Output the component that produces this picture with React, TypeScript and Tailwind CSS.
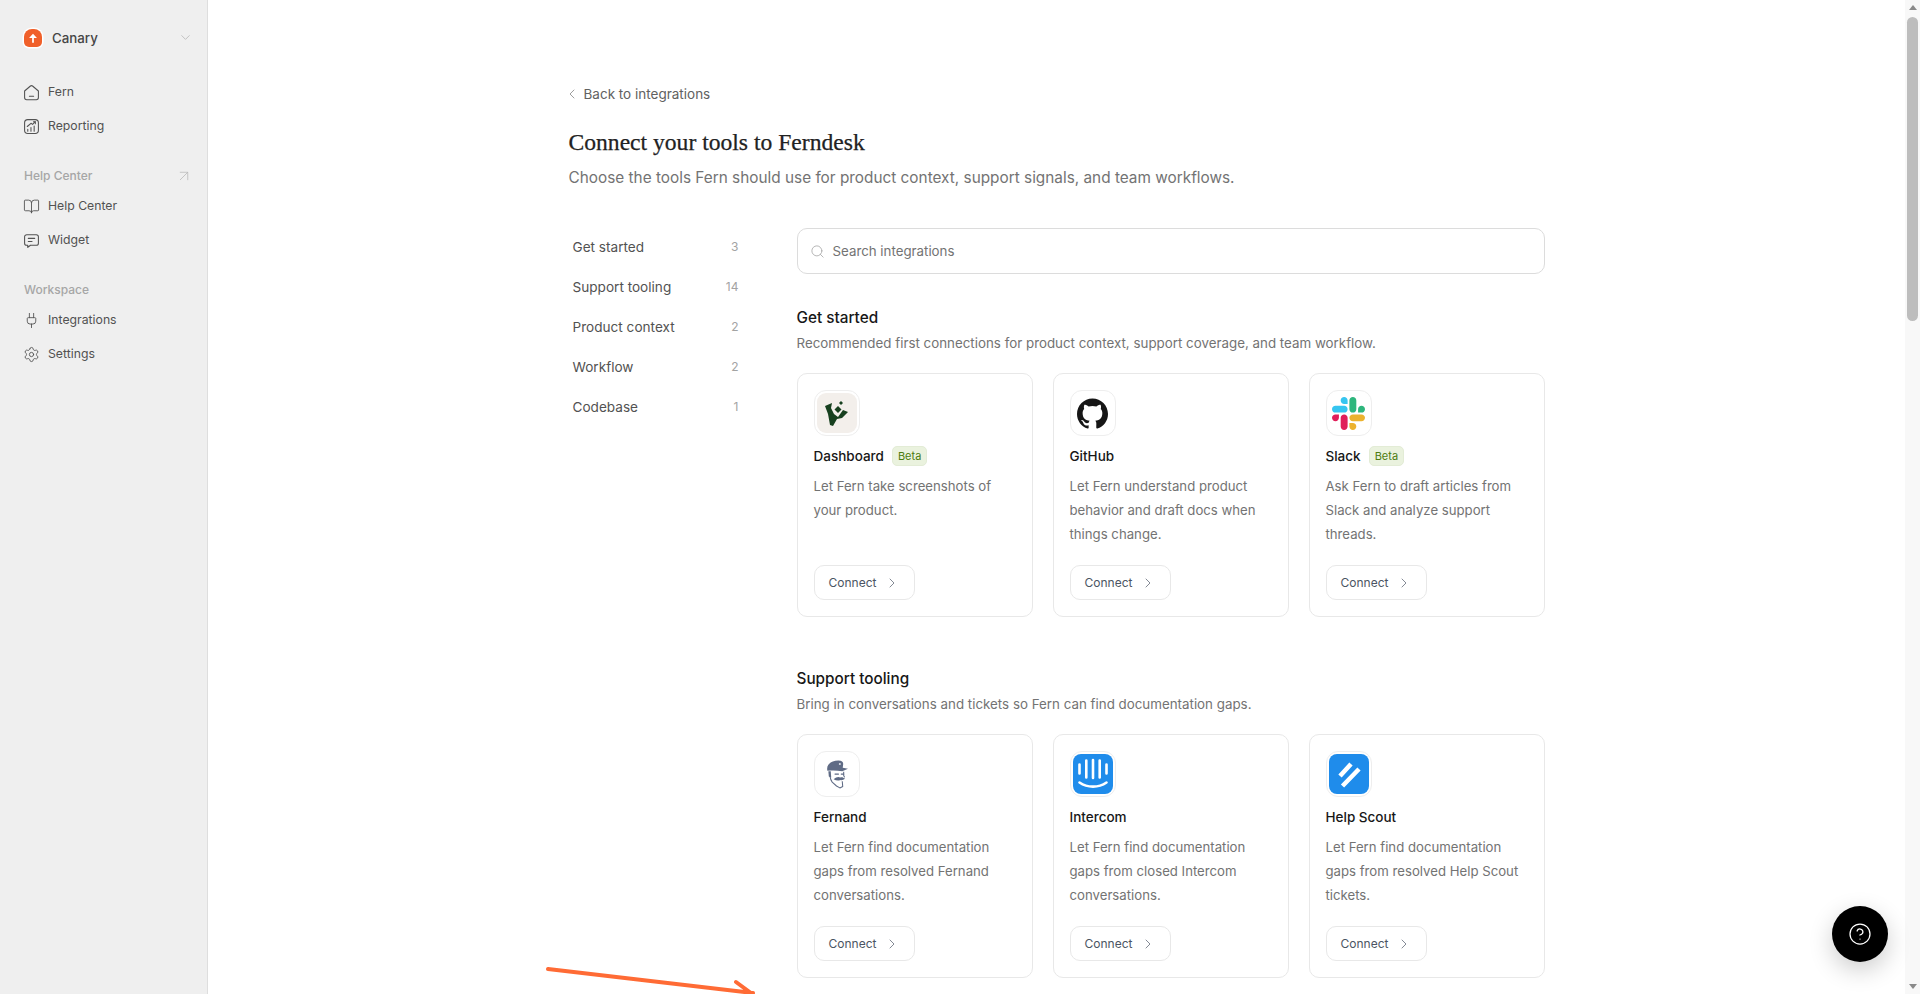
import React from 'react';
import {
  ArrowUpRight,
  BookOpen,
  ChevronDown,
  ChevronLeft,
  ChevronRight,
  CircleHelp,
  Plug,
  Search,
  Settings,
} from 'lucide-react';
import { SiGithub } from 'react-icons/si';

const FernIcon = () => (
  <svg viewBox="0 0 16 16" className="h-[17px] w-[17px]" fill="none" stroke="currentColor" strokeWidth="1" strokeLinejoin="round" strokeLinecap="round">
    <path d="M1.500 6.600 7 1.900a1.600 1.600 0 0 1 2 0l5.500 4.700v6.200a2 2 0 0 1-2 2h-9a2 2 0 0 1-2-2z" />
    <path d="M6 11.600h4" />
  </svg>
);

const ReportingIcon = () => (
  <svg viewBox="0 0 16 16" className="h-[17px] w-[17px]" fill="none" stroke="currentColor" strokeWidth="1" strokeLinejoin="round" strokeLinecap="round">
    <rect x="1.500" y="1.500" width="13" height="13" rx="3" />
    <path d="M4.500 12.500v-2M7.500 12.500V9M10.500 12.500V7.500M4 8l3.500-3 1.500 1 2.500-2.500" />
    <path d="M9.800 3.500h1.800v1.800" />
  </svg>
);

const WidgetIcon = () => (
  <svg viewBox="0 0 16 16" className="h-[17px] w-[17px]" fill="none" stroke="currentColor" strokeWidth="1" strokeLinejoin="round" strokeLinecap="round">
    <path d="M3.500 2.500h9a2 2 0 0 1 2 2v6a2 2 0 0 1-2 2H7l-2.500 2v-2h-1a2 2 0 0 1-2-2v-6a2 2 0 0 1 2-2z" />
    <path d="M5 6h6M5 9h3.500" />
  </svg>
);

const CanaryLogo = () => (
  <span className="flex h-[18px] w-[18px] items-center justify-center rounded-t-[8px] rounded-b-[5px] bg-[#f0602a] shadow-[0_0_0_1.5px_#ffffff]">
    <svg viewBox="0 0 16 16" className="h-[14px] w-[14px]" fill="#ffffff">
      <path d="M8 3 12.500 8H9v5.500H7V8H3.500z" />
    </svg>
  </span>
);

const DashboardLogo = () => (
  <span className="flex h-10 w-10 items-center justify-center rounded-[9px] bg-[#f3efeb]">
    <svg viewBox="0 0 23 25" className="h-[25px] w-[23px]" fill="#17401f">
      <path d="M0 5 7 2 6 7l3 6 4 3 5-7 5 2-6 6-5 1-4 7-3-1-2-11z" />
      <path d="M13 5l3.500 3.500L13 12 9.500 8.500z" />
      <path d="M16 0l2 2-2 2-2-2z" />
    </svg>
  </span>
);

const SlackLogo = () => (
  <svg viewBox="0 0 122.800 122.800" className="h-[33px] w-[33px]">
    <path fill="#E01E5A" d="M25.800 77.600c0 7.100-5.800 12.900-12.900 12.900S0 84.700 0 77.600s5.800-12.900 12.900-12.900h12.900v12.900zM32.300 77.600c0-7.100 5.800-12.900 12.900-12.900s12.900 5.800 12.900 12.900v32.300c0 7.100-5.800 12.900-12.900 12.900s-12.900-5.800-12.900-12.900V77.600z" />
    <path fill="#36C5F0" d="M45.200 25.800c-7.100 0-12.900-5.800-12.900-12.900S38.100 0 45.200 0s12.900 5.800 12.900 12.900v12.900H45.200zM45.200 32.300c7.100 0 12.900 5.800 12.900 12.900s-5.800 12.900-12.900 12.900H12.900C5.800 58.100 0 52.300 0 45.200s5.800-12.900 12.900-12.900h32.300z" />
    <path fill="#2EB67D" d="M97 45.200c0-7.100 5.800-12.900 12.900-12.900s12.900 5.800 12.900 12.900-5.800 12.900-12.900 12.900H97V45.200zM90.500 45.200c0 7.100-5.800 12.900-12.900 12.900s-12.900-5.800-12.900-12.900V12.900C64.700 5.800 70.500 0 77.600 0s12.900 5.800 12.900 12.900v32.300z" />
    <path fill="#ECB22E" d="M77.600 97c7.100 0 12.900 5.800 12.900 12.900s-5.800 12.900-12.900 12.900-12.900-5.800-12.900-12.900V97h12.900zM77.600 90.500c-7.100 0-12.900-5.800-12.900-12.900s5.800-12.900 12.900-12.900h32.300c7.100 0 12.900 5.800 12.900 12.900s-5.800 12.900-12.900 12.900H77.600z" />
  </svg>
);

const FernandLogo = () => (
  <svg viewBox="0 0 24 30" className="h-[29px] w-[23px]" fill="none">
    <path d="M2.500 11C1 5 6 0.500 14 0.500c3.500 0 5 1.500 5 3.500l-.5 4L24 9l-6 2.500c-5-.8-10-.8-15.500-.5z" fill="#5f6b85" />
    <circle cx="15.500" cy="4" r="1.100" fill="#d9dde6" />
    <path d="M3.500 11.500 4 17l2.500 1-.5-6.500z" fill="#5f6b85" />
    <path d="M5 16c.5 3 1 5 2.500 7l4.500 4 3.500 2 3-1.500-.5-5.500M19.500 12v4l1 2" stroke="#5f6b85" strokeWidth="1.100" strokeLinejoin="round" />
    <path d="M9 20c3-2.500 5-3 7-1.800 1.500-.7 3-.4 5 1.300-2 1.300-3.500 1.800-5 1.300-2 .9-4.500.7-7-.8z" fill="#5f6b85" />
    <path d="M10.500 14.500h3.500M17 14.500h2.500" stroke="#5f6b85" strokeWidth="1.300" strokeLinecap="round" />
  </svg>
);

const IntercomLogo = () => (
  <svg viewBox="0 0 40 40" className="h-10 w-10">
    <rect width="40" height="40" rx="8" fill="#1f8ceb" />
    <g stroke="#ffffff" strokeWidth="2.600" strokeLinecap="round" fill="none">
      <path d="M6.500 10.500v9M13.300 6.500v17M20 6v18M26.700 6.500v17M33.500 10.500v9" />
      <path d="M6.500 28.500c8 5.500 19 5.500 27 0" />
    </g>
  </svg>
);

const HelpScoutLogo = () => (
  <svg viewBox="0 0 40 40" className="h-10 w-10">
    <rect width="40" height="40" rx="8" fill="#1f8ceb" />
    <g stroke="#ffffff" strokeWidth="4.500" fill="none">
      <path d="M11 22 22 10M13.500 32 30 15" />
    </g>
  </svg>
);

const sidebarGroups = [
  {
    items: [
      { label: 'Fern', icon: <FernIcon /> },
      { label: 'Reporting', icon: <ReportingIcon /> },
    ],
  },
  {
    title: 'Help Center',
    external: true,
    items: [
      { label: 'Help Center', icon: <BookOpen className="h-[17px] w-[17px]" strokeWidth={1.25} /> },
      { label: 'Widget', icon: <WidgetIcon /> },
    ],
  },
  {
    title: 'Workspace',
    items: [
      { label: 'Integrations', icon: <Plug className="h-[17px] w-[17px]" strokeWidth={1.25} /> },
      { label: 'Settings', icon: <Settings className="h-[17px] w-[17px]" strokeWidth={1.25} /> },
    ],
  },
];

const categories = [
  { label: 'Get started', count: 3 },
  { label: 'Support tooling', count: 14 },
  { label: 'Product context', count: 2 },
  { label: 'Workflow', count: 2 },
  { label: 'Codebase', count: 1 },
];

const sections = [
  {
    title: 'Get started',
    description: 'Recommended first connections for product context, support coverage, and team workflow.',
    cards: [
      { name: 'Dashboard', beta: true, logo: <DashboardLogo />, text: 'Let Fern take screenshots of your product.' },
      { name: 'GitHub', logo: <SiGithub className="h-[31px] w-[31px] text-[#161616]" />, text: 'Let Fern understand product behavior and draft docs when things change.' },
      { name: 'Slack', beta: true, logo: <SlackLogo />, text: 'Ask Fern to draft articles from Slack and analyze support threads.' },
    ],
  },
  {
    title: 'Support tooling',
    description: 'Bring in conversations and tickets so Fern can find documentation gaps.',
    cards: [
      { name: 'Fernand', logo: <FernandLogo />, text: 'Let Fern find documentation gaps from resolved Fernand conversations.' },
      { name: 'Intercom', logo: <IntercomLogo />, text: 'Let Fern find documentation gaps from closed Intercom conversations.' },
      { name: 'Help Scout', logo: <HelpScoutLogo />, text: 'Let Fern find documentation gaps from resolved Help Scout tickets.' },
    ],
  },
];

const App = () => {
  return (
    <div className="relative flex h-screen overflow-hidden bg-white font-['Inter',sans-serif] text-[#404040]">
      {/* Sidebar */}
      <aside className="flex w-[208px] shrink-0 flex-col border-r border-[#dedede] bg-[#efefef] pl-6 pr-[14px] pt-7">
        <div className="flex h-[19px] items-center">
          <CanaryLogo />
          <span className="ml-[10px] flex-1 pt-[2px] text-[13.3px] font-medium text-[#454545]">Canary</span>
          <ChevronDown className="h-[15px] w-[15px] text-[#b5b5b5]" strokeWidth={1.25} />
        </div>
        {sidebarGroups.map((group, i) => (
          <div key={i} className={group.title ? 'mt-[26px]' : 'mt-[33px]'}>
            {group.title && (
              <div className="mb-[6px] flex h-[24px] items-center justify-between text-xs font-medium text-[#a6a6a6]">
                {group.title}
                {group.external && <ArrowUpRight className="h-[18px] w-[18px] text-[#b5b5b5]" strokeWidth={1} />}
              </div>
            )}
            <div className="flex flex-col gap-[10px]">
              {group.items.map((item) => (
                <div key={item.label} className="-ml-px flex h-6 items-center gap-2 text-[12.25px] text-[#525252]">
                  {item.icon}
                  {item.label}
                </div>
              ))}
            </div>
          </div>
        ))}
      </aside>

      {/* Main */}
      <main className="min-w-0 flex-1 overflow-hidden">
        <div className="mx-auto max-w-5xl px-6 pt-[84px]">
          <a className="flex h-5 items-center gap-[4px] text-[13.5px] text-[#616161]">
            <ChevronLeft className="-ml-[5px] h-4 w-4 text-[#8a8a8a]" strokeWidth={1.25} />
            Back to integrations
          </a>
          <h1 className="mt-[22px] font-['Liberation_Serif',serif] text-[23.6px] leading-8 font-medium text-[#222222] [-webkit-text-stroke:0.25px_#222222]">Connect your tools to Ferndesk</h1>
          <p className="mt-[8px] text-[15.35px] leading-6 text-[#737373]">Choose the tools Fern should use for product context, support signals, and team workflows.</p>

          <div className="mt-[38px] flex items-start gap-[58px]">
            <nav className="flex w-[170px] shrink-0 flex-col gap-1 pl-1 pt-px">
              {categories.map((c) => (
                <div key={c.label} className="flex h-9 items-center justify-between text-[13.6px] text-[#525252]">
                  {c.label}
                  <span className="text-xs text-[#a3a3a3]">{c.count}</span>
                </div>
              ))}
            </nav>

            <div className="min-w-0 flex-1">
              <label className="flex h-[46px] items-center gap-2 rounded-[10px] border border-[#dcdcdc] bg-white px-3">
                <Search className="h-[15px] w-[15px] text-[#a3a3a3]" strokeWidth={1.25} />
                <span className="pt-[2px] text-[13.3px] text-[#737373]">Search integrations</span>
              </label>

              {sections.map((section) => (
                <section key={section.title} className="mt-[31px] mb-[49px]">
                  <h2 className="pt-px text-[15.3px] leading-6 font-medium text-[#171717]">{section.title}</h2>
                  <p className="mt-[3px] text-[13.35px] leading-5 text-[#737373]">{section.description}</p>
                  <div className="mt-5 grid grid-cols-3 gap-5">
                    {section.cards.map((card) => (
                      <div key={card.name} className="flex h-[244px] flex-col rounded-[10px] border border-[#e8e8e8] bg-white p-4">
                        <span className="flex h-[46px] w-[46px] items-center justify-center rounded-xl border border-[#eeeeee] bg-white">{card.logo}</span>
                        <div className="mt-[10px] flex h-5 items-center gap-2">
                          <span className="text-[13.5px] font-medium text-[#171717]">{card.name}</span>
                          {card.beta && <span className="flex h-5 items-center rounded-[5px] border border-[#e3ecd6] bg-[#eaf2de] px-[5px] text-[11px] text-[#4d7c0f]">Beta</span>}
                        </div>
                        <p className="mt-2 text-[13.2px] leading-6 text-[#737373]">{card.text}</p>
                        <button className="mt-auto flex h-[35px] w-[101px] items-center gap-2 rounded-[10px] border border-[#e8e8e8] bg-white pl-[14px] text-xs text-[#4b5563]">
                          Connect
                          <ChevronRight className="h-4 w-4 text-[#6b7280]" strokeWidth={1.25} />
                        </button>
                      </div>
                    ))}
                  </div>
                </section>
              ))}
            </div>
          </div>
        </div>
      </main>

      {/* Page scrollbar */}
      <div className="flex w-[15px] shrink-0 flex-col items-center bg-[#f8f8f8] py-[5px]">
        <span className="h-0 w-0 border-x-[4px] border-b-[5px] border-x-transparent border-b-[#8a8a8a]" />
        <span className="mt-[7px] h-[304px] w-[11px] rounded-full bg-[#bdbdbd]" />
        <span className="mt-auto h-0 w-0 border-x-[4px] border-t-[5px] border-x-transparent border-t-[#8a8a8a]" />
      </div>

      {/* Annotation arrow over the page */}
      <svg className="pointer-events-none absolute left-[541px] top-[961px] h-[33px] w-[220px]" viewBox="0 0 220 33" fill="none" stroke="#ff6b35" strokeWidth="4" strokeLinecap="round">
        <path d="M7 8 212 32M195 21l15 11" />
      </svg>

      {/* Help button */}
      <button className="absolute bottom-[32px] right-[32px] flex h-14 w-14 items-center justify-center rounded-full bg-black text-white shadow-[0_8px_24px_rgba(0,0,0,0.2)]">
        <CircleHelp className="h-6 w-6" strokeWidth={1.25} />
      </button>
    </div>
  );
};

export default App;
